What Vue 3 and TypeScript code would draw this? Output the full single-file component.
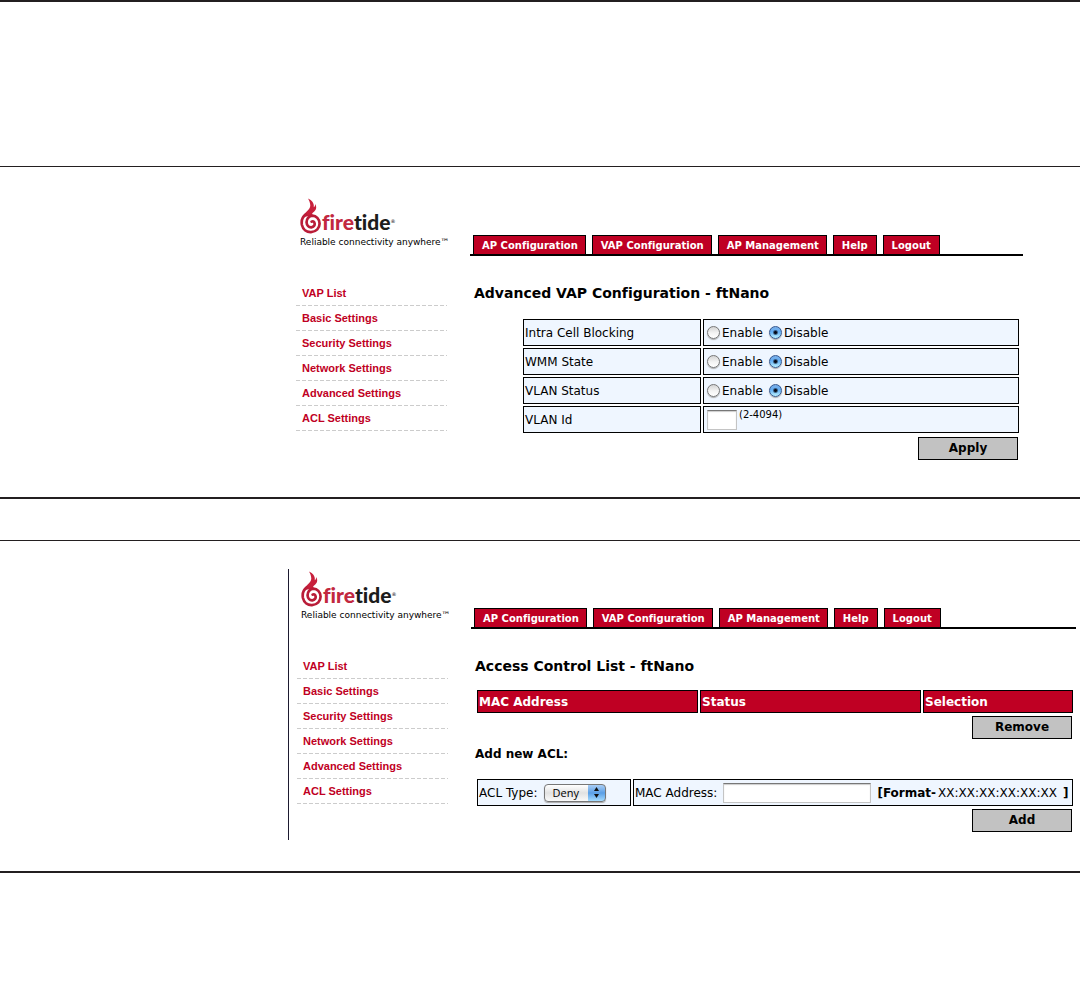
<script setup lang="ts">
import { ref } from 'vue'

const tabs: string[] = ['AP Configuration', 'VAP Configuration', 'AP Management', 'Help', 'Logout']
const menu: string[] = [
  'VAP List',
  'Basic Settings',
  'Security Settings',
  'Network Settings',
  'Advanced Settings',
  'ACL Settings',
]

interface Panel {
  id: string
  title: string
}
const panels: Panel[] = [
  { id: 'advanced', title: 'Advanced VAP Configuration - ftNano' },
  { id: 'acl', title: 'Access Control List - ftNano' },
]

interface Toggle {
  id: string
  label: string
  value: string
}
const toggles = ref<Toggle[]>([
  { id: 'intra', label: 'Intra Cell Blocking', value: 'disable' },
  { id: 'wmm', label: 'WMM State', value: 'disable' },
  { id: 'vlan', label: 'VLAN Status', value: 'disable' },
])
const vlanId = ref('')
const aclType = ref('Deny')
const mac = ref('')
</script>

<template>
  <main class="sheet">
    <section v-for="panel in panels" :key="panel.id" class="figure" :class="panel.id">
      <div class="panel">
        <header class="top">
          <div class="brand">
            <div class="logo">
              <svg class="flame" viewBox="0 0 21 35" aria-hidden="true">
                <path
                  d="M2.800 18.500C3.800 13.500 9.600 11.800 9.800 7.500C9.900 4.500 8.600 2.300 7.600 .4C11.400 2.200 13.800 5 13.200 9C14.200 8.400 14.600 7.200 14.500 5.800C16.600 9 15.400 12 12.800 13.800C11.400 14.800 11.200 15.500 12.500 17Z"
                  fill="#c8203c"
                />
                <path
                  d="M5.500 16C2.400 18.200 .9 22 1.700 26.300C2.700 31 6.500 33.300 10.500 33.100C15.600 32.800 19 29.200 18.800 24.600C18.600 20.300 15.600 17.200 11.900 17.200C8.300 17.300 6.100 20.500 6.200 23.700C6.400 26.900 8.400 28.700 10.900 28.500C13.200 28.200 14.400 26.400 14 24.500C13.600 22.900 12.200 22.300 11.100 22.900"
                  fill="none"
                  stroke="#b91c38"
                  stroke-width="2.600"
                  stroke-linecap="round"
                />
              </svg>
              <span class="word"><span class="fire">fire</span>tide</span><span class="reg">®</span>
            </div>
            <div class="tagline">Reliable connectivity anywhere™</div>
          </div>
          <nav class="tabs">
            <a v-for="tab in tabs" :key="tab" href="#" class="tab">{{ tab }}</a>
          </nav>
        </header>

        <div class="body">
          <nav class="side">
            <a v-for="item in menu" :key="item" href="#">{{ item }}</a>
          </nav>

          <div class="content">
            <h1>{{ panel.title }}</h1>

            <form v-if="panel.id === 'advanced'" class="settings" @submit.prevent>
              <table class="grid">
                <tbody>
                  <tr v-for="t in toggles" :key="t.id">
                    <th scope="row" class="name">{{ t.label }}</th>
                    <td>
                      <div class="line">
                        <label><input v-model="t.value" type="radio" :name="t.id" value="enable" />Enable</label>
                        <label><input v-model="t.value" type="radio" :name="t.id" value="disable" />Disable</label>
                      </div>
                    </td>
                  </tr>
                  <tr>
                    <th scope="row" class="name"><label for="vlan-id">VLAN Id</label></th>
                    <td>
                      <div class="line">
                        <input id="vlan-id" v-model="vlanId" type="text" class="box short" />
                        <span class="hint">(2-4094)</span>
                      </div>
                    </td>
                  </tr>
                </tbody>
              </table>
              <button type="submit" class="btn">Apply</button>
            </form>

            <form v-else class="acl-form" @submit.prevent>
              <table class="grid list">
                <thead>
                  <tr>
                    <th scope="col" class="wide">MAC Address</th>
                    <th scope="col" class="wide">Status</th>
                    <th scope="col">Selection</th>
                  </tr>
                </thead>
              </table>
              <button type="button" class="btn">Remove</button>
              <h2>Add new ACL:</h2>
              <table class="grid">
                <tbody>
                  <tr>
                    <td class="type">
                      <div class="line">
                        <label for="acl-type">ACL Type:</label>
                        <span class="select">
                          <select id="acl-type" v-model="aclType">
                            <option>Deny</option>
                            <option>Allow</option>
                          </select>
                          <svg viewBox="0 0 7 11" aria-hidden="true">
                            <path d="M3.500 0L6 4H1ZM3.500 11L1 7H6Z" fill="#111" />
                          </svg>
                        </span>
                      </div>
                    </td>
                    <td>
                      <div class="line">
                        <label for="mac">MAC Address:</label>
                        <input id="mac" v-model="mac" type="text" class="box long" />
                        <span class="format"><b>[Format-</b><span>XX:XX:XX:XX:XX:XX</span><b>]</b></span>
                      </div>
                    </td>
                  </tr>
                </tbody>
              </table>
              <button type="submit" class="btn">Add</button>
            </form>
          </div>
        </div>
      </div>
    </section>
  </main>
</template>

<style>
body {
  margin: 0;
  background: #fff;
}
</style>

<style scoped>
* {
  box-sizing: border-box;
}
.sheet {
  border-top: 2px solid #231f20;
  padding-top: 164px;
  font-family: 'DejaVu Sans', Verdana, sans-serif;
  font-size: 12px;
  font-variant-ligatures: none;
  color: #000;
}
.figure {
  border-top: 1px solid #231f20;
  border-bottom: 2px solid #231f20;
}
.figure.advanced {
  padding: 28px 57px 37px 287px;
  margin-bottom: 41px;
}
.figure.acl {
  padding: 28px 4px 31px 288px;
}
.panel {
  padding: 3px 0 0 9px;
}
.acl .panel {
  border-left: 1px solid #1d1a30;
  padding: 2px 0 8px 8px;
}
.top,
.body {
  display: grid;
  grid-template-columns: 174px minmax(0, 1fr);
}
.top {
  height: 58px;
  align-items: end;
}
.brand {
  align-self: start;
  padding-left: 4px;
}
.logo {
  display: flex;
  height: 37px;
}
.flame {
  width: 22px;
  height: 36px;
}
.word {
  font-family: Lato, sans-serif;
  font-size: 21px;
  font-weight: 900;
  line-height: 24px;
  color: #1c1c1c;
  padding-top: 12px;
}
.fire {
  color: #c2283f;
}
.reg {
  font-size: 5px;
  line-height: 8px;
  padding-top: 19px;
}
.tagline {
  font-size: 9px;
  line-height: 14px;
  white-space: nowrap;
}
.tabs {
  display: flex;
  gap: 6px;
  padding-left: 3px;
  border-bottom: 2px solid #000;
}
.tab {
  height: 19px;
  padding: 0 8px;
  border: 1px solid #000;
  border-bottom: 0;
  background: #bf0023;
  color: #fff;
  font-size: 10px;
  font-weight: 700;
  line-height: 19px;
  text-decoration: none;
  white-space: nowrap;
}
.tab:nth-child(-n + 3) {
  padding-right: 7px;
}
.body {
  padding-top: 25px;
}
.side a {
  display: block;
  width: 151px;
  padding: 0 0 1px 6px;
  font-family: 'Liberation Sans', Arial, sans-serif;
  font-size: 11px;
  font-weight: 700;
  line-height: 24px;
  color: #bf0023;
  text-decoration: none;
  background: repeating-linear-gradient(90deg, #ccc 0 4px, transparent 4px 6px) bottom / 100% 1px no-repeat;
}
h1 {
  margin: 0 0 12px 4px;
  font-size: 14px;
  line-height: 24px;
}
.acl h1 {
  margin-bottom: 10px;
}
form {
  display: flex;
  flex-direction: column;
}
.settings {
  margin: 0 2px 0 51px;
}
.acl-form {
  margin: 0 1px 0 4px;
}
.grid {
  width: 100%;
  border-spacing: 2px;
  table-layout: fixed;
}
.grid td,
.grid th {
  height: 27px;
  padding: 0 1px;
  border: 1px solid #000;
  background: #eff6ff;
  font-weight: 400;
  text-align: left;
  white-space: nowrap;
}
.grid .name {
  width: 178px;
}
.grid.list th {
  height: 23px;
  background: #bf0023;
  color: #fff;
  font-weight: 700;
}
.grid .wide {
  width: 221px;
}
.grid .type {
  width: 154px;
}
.line {
  display: flex;
  align-items: center;
  gap: 6px;
}
.line label {
  display: flex;
  align-items: center;
}
input[type='radio'] {
  appearance: none;
  width: 13px;
  height: 13px;
  margin: 0 2px;
  border: 1px solid #777;
  border-radius: 50%;
  background: linear-gradient(#d4d4d4, #f4f4f4 55%, #fff);
  box-shadow: 0 1px 1px #aaa;
}
.line label + label input {
  margin-left: 0;
}
input[type='radio']:checked {
  border-color: #35588f;
  background:
    radial-gradient(circle, #050a18 0 1px, transparent 3px),
    linear-gradient(#79aee8, #62adf3 45%, #b9f1ff);
}
.box {
  height: 20px;
  margin: 0;
  padding: 0 3px;
  border: 1px solid #c4c4c4;
  border-top-color: #777;
  background: #fff;
  box-shadow: inset 0 1px 1px #ccc;
  font: inherit;
}
.short {
  width: 30px;
  margin-left: 2px;
}
.long {
  width: 148px;
}
.hint {
  font-size: 10px;
  line-height: 12px;
  margin-left: -4px;
  padding-bottom: 10px;
}
.format {
  display: flex;
  gap: 2px;
}
.format b:last-child {
  margin-left: 4px;
}
.btn {
  align-self: flex-end;
  width: 100px;
  height: 23px;
  margin: 1px 3px 0 0;
  padding: 0 0 2px;
  border: 1px solid #000;
  background: #c2c2c2;
  color: #000;
  font: inherit;
  font-weight: 700;
}
.settings .btn {
  margin-top: 2px;
}
h2 {
  margin: 7px 0 15px;
  font-size: 12px;
  line-height: 16px;
}
.select {
  position: relative;
  display: inline-flex;
  margin-left: 1px;
}
.select select {
  appearance: none;
  width: 62px;
  height: 18px;
  padding: 0 0 0 7px;
  border: 1px solid #777;
  border-radius: 4px;
  background:
    linear-gradient(#a9cdf5, #5b9fe6 50%, #a5dcff) right / 17px 100% no-repeat,
    linear-gradient(#fff, #e2e2e2 50%, #fafafa);
  box-shadow: 0 1px 1px #aaa;
  font: 11px/16px 'Open Sans', sans-serif;
  color: #000;
}
.select svg {
  position: absolute;
  right: 6px;
  top: 3px;
  width: 7px;
  height: 11px;
  pointer-events: none;
}
</style>
